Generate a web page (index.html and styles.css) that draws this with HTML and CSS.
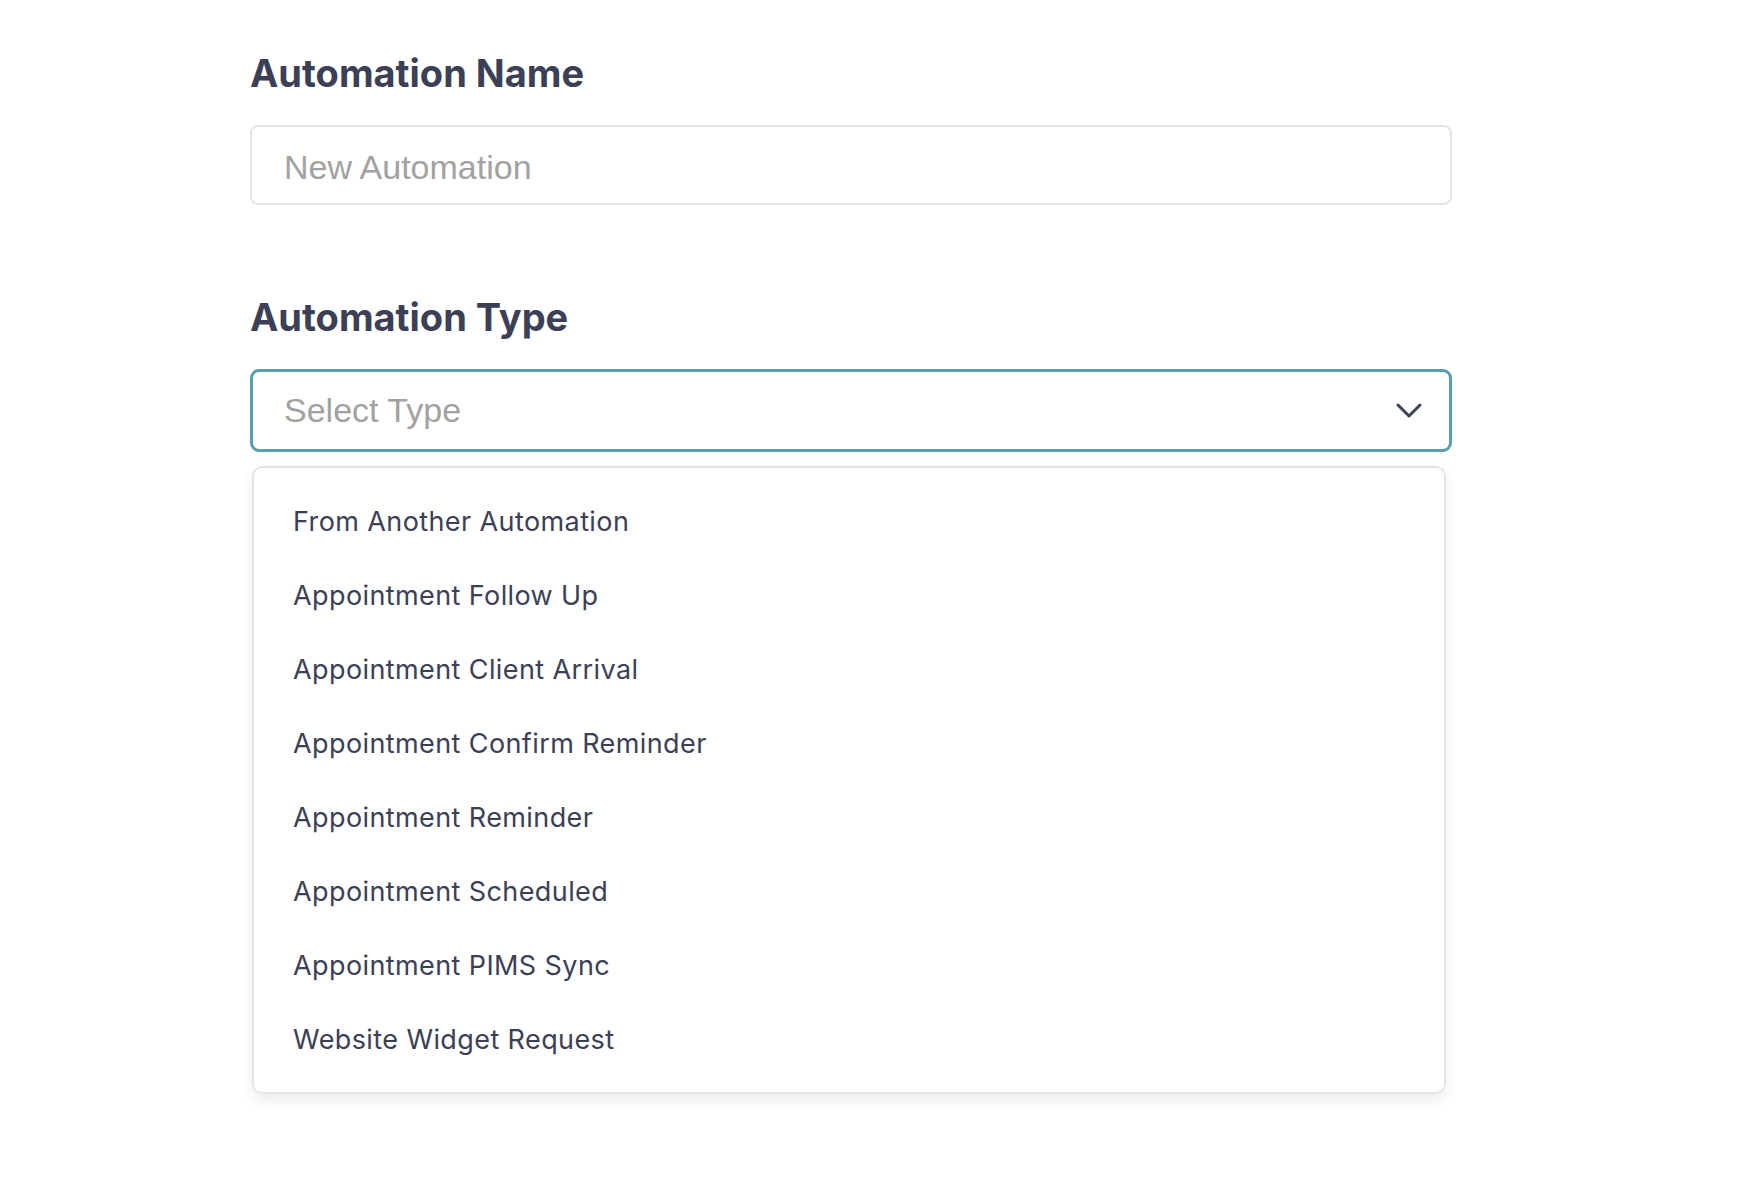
FILE: index.html
```html
<!DOCTYPE html>
<html>

<head>
  <meta charset="utf-8">
  <title>New Automation</title>
  <link rel="stylesheet" href="styles.css">
</head>

<body>
  <div class="form">
    <div class="field">
      <h2 class="label">Automation Name</h2>
      <input type="text" class="text-input" placeholder="New Automation">
    </div>

    <div class="field">
      <h2 class="label">Automation Type</h2>
      <div class="select">
        <span class="select-placeholder">Select Type</span>
        <svg class="chevron" width="26" height="16" viewBox="0 0 26 16">
          <path d="M2 2 L13 13 L24 2" fill="none" stroke="#3d4258" stroke-width="3" stroke-linecap="round" stroke-linejoin="round" />
        </svg>
      </div>
      <ul class="menu">
        <li>From Another Automation</li>
        <li>Appointment Follow Up</li>
        <li>Appointment Client Arrival</li>
        <li>Appointment Confirm Reminder</li>
        <li>Appointment Reminder</li>
        <li>Appointment Scheduled</li>
        <li>Appointment PIMS Sync</li>
        <li>Website Widget Request</li>
      </ul>
    </div>
  </div>
</body>

</html>
```

FILE: styles.css
```css
body {
  margin: 0;
  background: #fff;
  font-family: "Inter", "Liberation Sans", sans-serif;
  color: #3c4056;
}

.form {
  width: 1202px;
  margin-left: 250px;
  padding-top: 50px;
}

.field {
  margin-bottom: 89px;
}

.label {
  margin: 0 0 29px 0;
  font-size: 38px;
  line-height: 46px;
  font-weight: 700;
  color: #3c4056;
}

.text-input {
  display: block;
  box-sizing: border-box;
  width: 100%;
  height: 80px;
  padding: 4px 0 0 32px;
  border: 2px solid #e3e5e5;
  border-radius: 8px;
  font-family: "Liberation Sans", sans-serif;
  font-size: 34px;
  color: #3c4056;
  outline: none;
}

.text-input::placeholder {
  color: #a2a2a2;
}

.select {
  box-sizing: border-box;
  height: 83px;
  display: flex;
  align-items: center;
  justify-content: space-between;
  padding: 0 27px 0 31px;
  border: 3px solid #5a9fb0;
  border-radius: 9px;
}

.select-placeholder {
  font-family: "Liberation Sans", sans-serif;
  font-size: 34px;
  color: #a2a2a2;
}

.menu {
  list-style: none;
  margin: 14px 6px 0 2px;
  padding: 17px 0 15px 0;
  border: 2px solid #e3e5e5;
  border-radius: 10px;
  box-shadow: 0 6px 14px rgba(0, 0, 0, 0.08);
}

.menu li {
  height: 74px;
  line-height: 74px;
  padding-left: 39px;
  font-size: 27px;
  color: #3c4056;
  letter-spacing: 0.4px;
}
```
